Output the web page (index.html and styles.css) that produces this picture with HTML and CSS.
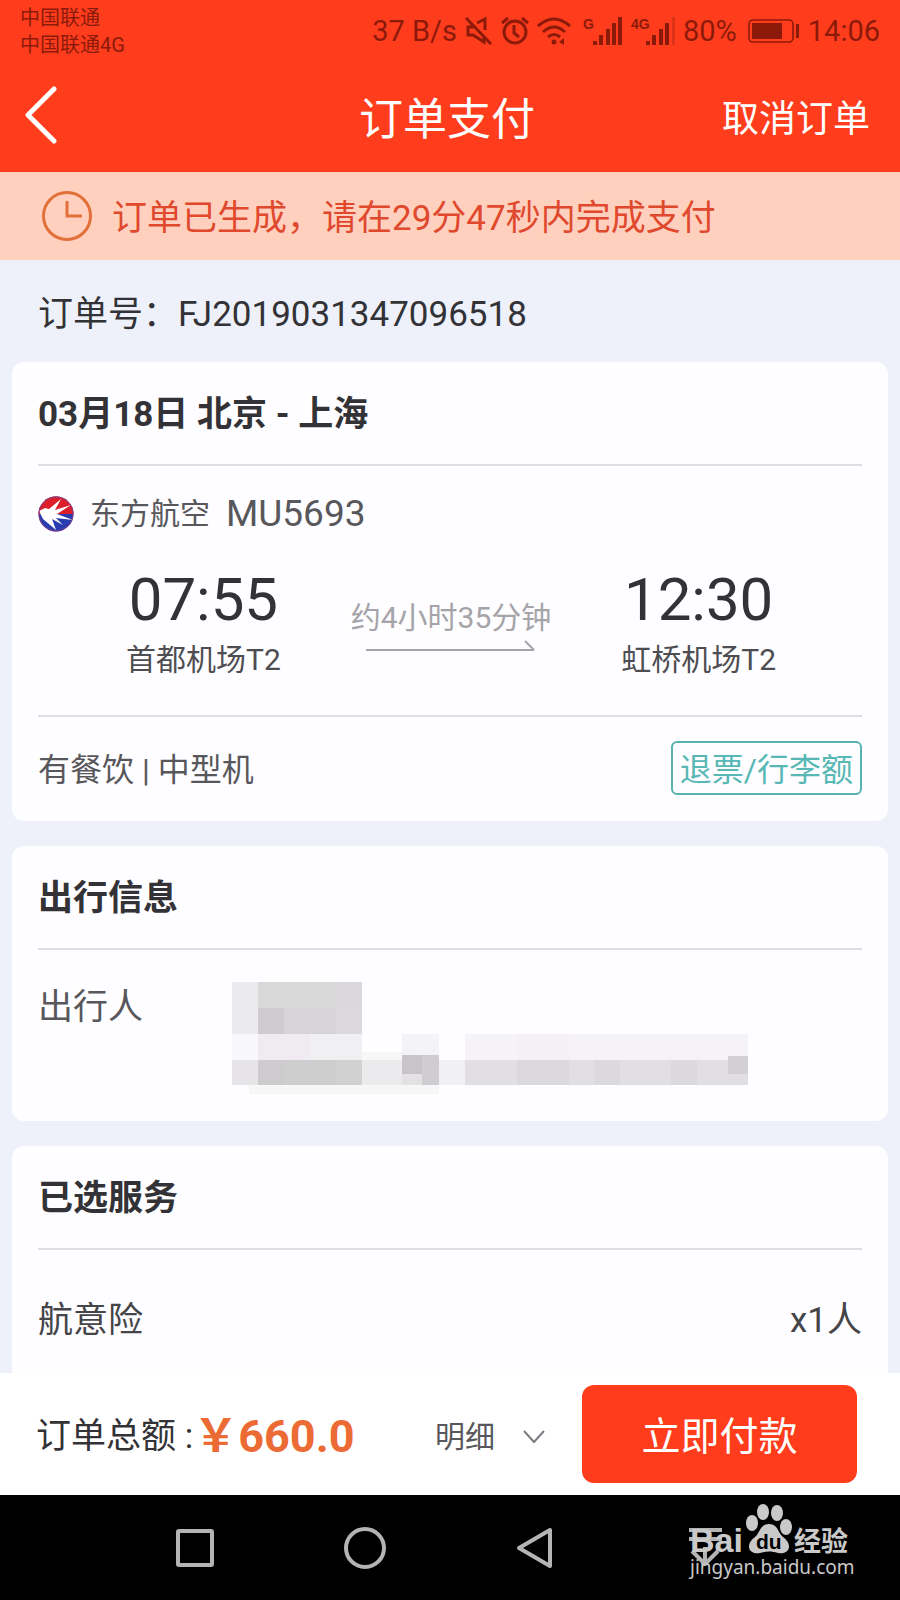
FILE: index.html
```html
<!DOCTYPE html>
<html lang="zh-CN">
<head>
<meta charset="utf-8">
<meta name="viewport" content="width=device-width, initial-scale=1">
<title>订单支付</title>
<link rel="stylesheet" href="styles.css">
</head>
<body>
<div class="page">
  <header class="top">
    <div class="status">
      <div class="carriers"><div>中国联通</div><div>中国联通4G</div></div>
      <div class="indicators">
        <span>37 B/s</span>
        <svg width="28" height="28" viewBox="0 0 28 28" fill="none" stroke="currentColor" stroke-width="3"><path d="M1 1l25 26M9 10H3v8h5l11 7v-5M12 6l8-4v11"/></svg>
        <svg width="28" height="28" viewBox="0 0 28 28" fill="none" stroke="currentColor" stroke-width="3"><circle cx="14" cy="15" r="11"/><path d="M13 8v8l5 4M1 6l6-5M27 6l-6-5"/></svg>
        <svg width="34" height="28" viewBox="0 0 34 28" fill="none" stroke="currentColor" stroke-width="3"><path d="M1 9Q17-5 33 9M6 15q11-10 22 0M11 20q6-5 12 0"/><circle cx="17" cy="25" r="2.5" fill="currentColor" stroke="none"/><path d="M22 25l5-4v7z" fill="currentColor" stroke="none"/></svg>
        <svg class="signal-first" width="40" height="28" viewBox="0 0 40 28" fill="currentColor"><text x="0" y="12" font-size="14" class="net">G</text><path d="M10 24h4v4h-4zM16 18h4v10h-4zM23 12h4v16h-4zM29 6h4v22h-4zM35 0h4v28h-4z"/></svg>
        <svg width="44" height="28" viewBox="0 0 44 28" fill="currentColor"><text x="0" y="12" font-size="14" class="net">4G</text><path d="M15 24h4v4h-4zM21 18h4v10h-4zM28 12h4v16h-4zM34 6h4v22h-4z"/><path d="M41 0h3v28h-3z" opacity=".3"/></svg>
        <span class="battery-level">80%</span>
        <svg width="52" height="26" viewBox="0 0 52 26" fill="none" stroke="currentColor"><rect x="1" y="2" width="44" height="22" rx="4" stroke-width="1.6"/><path d="M4 5h30v16H4zM48 6h3v14h-3z" fill="currentColor" stroke="none"/></svg>
        <span>14:06</span>
      </div>
    </div>
    <div class="bar">
      <button class="back" type="button" aria-label="返回"><svg width="34" height="58" viewBox="0 0 34 58" fill="none" stroke="#fff" stroke-width="5" stroke-linecap="round" stroke-linejoin="round"><path d="M30 3L4 29l26 26"/></svg></button>
      <h1 class="title">订单支付</h1>
      <button class="cancel" type="button">取消订单</button>
    </div>
  </header>

  <div class="notice">
    <svg width="50" height="50" viewBox="0 0 50 50" fill="none" stroke="#e2703a" stroke-width="3"><circle cx="25" cy="25" r="23.5"/><path d="M25 10v15h15"/></svg>
    <span>订单已生成，请在29分47秒内完成支付</span>
  </div>

  <main class="content">
    <p class="order-no">订单号：FJ2019031347096518</p>

    <section class="card">
      <h2 class="card-head">03月18日 北京 - 上海</h2>
      <div class="flight">
        <svg width="36" height="38" viewBox="0 0 36 38"><defs><clipPath id="disc"><circle cx="18" cy="19" r="17.5"/></clipPath></defs><g clip-path="url(#disc)"><path fill="#2a3db0" d="M0 0h36v38H0z"/><path fill="#dc1f2b" d="M0 0h36v19H0z"/><path fill="#fff" d="M1 16l6-3 4 1L23 4l-6 11 16-5-14 9 16 6-17-2 7 7-11-6 4 11L5 24z"/></g><circle cx="18" cy="19" r="17" fill="none" stroke="#8a3a80"/></svg>
        <span class="airline">东方航空</span>
        <span class="flight-no">MU5693</span>
      </div>
      <div class="route">
        <div class="stop"><div class="time">07:55</div><div class="airport">首都机场T2</div></div>
        <div class="duration">
          <span>约4小时35分钟</span>
          <svg width="170" height="12" viewBox="0 0 170 12" fill="none" stroke="#a5a4a9" stroke-width="2"><path d="M0 10h168M159 1l9 9"/></svg>
        </div>
        <div class="stop"><div class="time">12:30</div><div class="airport">虹桥机场T2</div></div>
      </div>
      <div class="extras">
        <span>有餐饮 | 中型机</span>
        <button class="rules" type="button">退票/行李额</button>
      </div>
    </section>

    <section class="card">
      <h2 class="card-head">出行信息</h2>
      <div class="traveller">
        <span>出行人</span>
        <svg width="516" height="112" viewBox="0 0 516 112" shape-rendering="crispEdges" aria-hidden="true">
          <path fill="#ebeaec" d="M0 0h26v52H0z"/><path fill="#d9d8d9" d="M26 0h78v26H26z"/><path fill="#dad6db" d="M104 0h26v26h-26z"/>
          <path fill="#cfcbd0" d="M26 26h26v26H26z"/><path fill="#d7d3d8" d="M52 26h52v26H52z"/><path fill="#dcd9de" d="M104 26h26v26h-26z"/>
          <path fill="#f8f7f9" d="M0 52h26v26H0z"/><path fill="#efebf0" d="M26 52h52v26H26z"/><path fill="#f0eff1" d="M78 52h52v26H78z"/>
          <path fill="#f8f7f8" d="M17 103h190v9H17zM130 70h40v8h-40z"/><path fill="#e7e4e8" d="M0 78h26v25H0z"/><path fill="#cdcbce" d="M26 78h26v25H26z"/><path fill="#cfcecf" d="M52 78h52v25H52z"/><path fill="#d2d1d2" d="M104 78h26v25h-26z"/>
          <path fill="#ebeaec" d="M130 78h40v25h-40z"/><path fill="#f4f3f5" d="M170 52h37v21h-37z"/><path fill="#e3e1e4" d="M170 92h20v11h-20z"/><path fill="#c8c4ca" d="M170 73h20v19h-20z"/><path fill="#d0cdd2" d="M190 73h17v30h-17z"/>
          <path fill="#f1f0f2" d="M207 78h26v25h-26z"/><path fill="#f5f3f6" d="M233 52h283v26H233z"/><path fill="#f4f0f5" d="M285 52h52v26h-52z"/>
          <path fill="#e2dfe4" d="M233 78h283v25H233z"/><path fill="#dcd9de" d="M285 78h52v25h-52zM362 78h26v25h-26zM439 78h26v25h-26z"/><path fill="#d3d0d5" d="M496 74h20v18h-20z"/>
        </svg>
      </div>
    </section>

    <section class="card card-last">
      <h2 class="card-head">已选服务</h2>
      <div class="service"><span>航意险</span><span>x1人</span></div>
    </section>
  </main>

  <footer class="pay">
    <div class="total">订单总额 :<strong class="amount">￥660.0</strong></div>
    <button class="detail" type="button">明细<svg width="24" height="14" viewBox="0 0 24 14" fill="none" stroke="#7b7a80" stroke-width="2"><path d="M2 1l10 11L22 1"/></svg></button>
    <button class="submit" type="button">立即付款</button>
  </footer>

  <nav class="system-nav">
    <button type="button" aria-label="最近任务"><svg width="42" height="42" viewBox="0 0 42 42"><rect x="4" y="4" width="34" height="34" rx="1"/></svg></button>
    <button type="button" aria-label="主页"><svg width="42" height="42" viewBox="0 0 42 42"><circle cx="21" cy="21" r="19"/></svg></button>
    <button type="button" aria-label="后退"><svg width="42" height="42" viewBox="0 0 42 42"><path d="M5 21L36 3v36z"/></svg></button>
    <button type="button" aria-label="通知栏"><svg width="42" height="42" viewBox="0 0 42 42"><path d="M5 3h33M5 12h33M21 20v17M8 24l13 13 13-13"/></svg></button>
    <svg class="watermark" width="176" height="84" viewBox="0 0 176 84" fill="#c9c9c9" aria-label="Baidu经验">
      <text x="6" y="50" font-size="34" class="wm-latin">Bai</text>
      <ellipse cx="68" cy="21" rx="6" ry="8"/><ellipse cx="79" cy="10" rx="6" ry="8"/><ellipse cx="93" cy="11" rx="6" ry="8"/><ellipse cx="102" cy="25" rx="6" ry="8"/>
      <path d="M85 22c-9 0-9 9-14 13-10 7-7 18 5 16 7-2 11-2 18 0 12 2 15-9 5-16-5-4-5-13-14-13z"/>
      <text x="72" y="47" font-size="21" fill="#000" class="wm-latin">du</text>
      <text x="110" y="49" font-size="27" class="wm-cjk">经验</text>
      <text x="6" y="72" font-size="19" class="wm-url">jingyan.baidu.com</text>
    </svg>
  </nav>
</div>
</body>
</html>
```
FILE: styles.css
```css
* { box-sizing: border-box; }
body {
  margin: 0;
  background: #eef1fa;
  color: #333236;
  font-family: Roboto, "Noto Sans CJK SC", sans-serif;
  font-size: 35px;
  line-height: 44px;
}
button {
  padding: 0;
  border: 0;
  background: none;
  color: inherit;
  font: inherit;
  cursor: pointer;
}
h1, h2, p { margin: 0; }
svg { display: block; flex: none; }

.page { display: flex; flex-direction: column; min-height: 100vh; }

.top { background: #ff3d1d; color: #fff; }
.status {
  display: flex;
  justify-content: space-between;
  height: 62px;
  padding: 5px 20px 0;
  color: #8c1a0a;
}
.carriers { font-size: 20px; line-height: 27px; }
.indicators {
  display: flex;
  align-items: center;
  gap: 8px;
  height: 52px;
  font-size: 29px;
  line-height: 52px;
}
.signal-first { margin-left: 4px; }
.battery-level { margin-right: 3px; }
.net { font-family: "Liberation Sans", sans-serif; font-weight: 700; }
.bar {
  display: grid;
  grid-template-columns: 1fr auto 1fr;
  align-items: center;
  height: 110px;
  padding: 0 30px 4px 24px;
}
.back { justify-self: start; }
.title { padding-top: 10px; font-size: 44px; font-weight: 400; line-height: 60px; }
.cancel { justify-self: end; padding-top: 10px; font-size: 37px; }

.notice {
  display: flex;
  align-items: center;
  gap: 20px;
  height: 88px;
  padding: 0 42px;
  background: #ffd0be;
  color: #e0492d;
}
.notice span { padding-top: 6px; }

.content { display: flex; flex: 1; flex-direction: column; gap: 25px; padding: 0 12px; }
.order-no { margin-bottom: -25px; padding: 33px 26px 25px; }
.card { padding: 0 26px; border-radius: 12px; background: #fefdff; }
.card-last { flex: 1; border-radius: 12px 12px 0 0; }
.card-head {
  padding: 31px 0 27px;
  border-bottom: 2px solid #dfdee1;
  font-size: 35px;
  font-weight: 700;
}

.flight { display: flex; align-items: center; padding-top: 26px; color: #58575b; }
.airline { margin-left: 16px; font-size: 30px; }
.flight-no { margin-left: 16px; font-size: 37px; }
.route {
  display: flex;
  align-items: center;
  justify-content: space-between;
  padding: 28px 86px 31px 88px;
  border-bottom: 2px solid #dfdee1;
}
.stop { text-align: center; }
.time { font-size: 60px; line-height: 72px; }
.airport { color: #4e4d51; font-size: 30px; line-height: 48px; }
.duration {
  display: flex;
  flex-direction: column;
  align-items: center;
  color: #a5a4a9;
  font-size: 30px;
}
.extras {
  display: flex;
  align-items: center;
  justify-content: space-between;
  padding: 24px 0 26px;
  color: #58575b;
  font-size: 32px;
}
.extras span { padding-top: 4px; }
.rules {
  padding: 5px 7px 1px;
  border: 2px solid #58b3b0;
  border-radius: 6px;
  color: #58b8b5;
}

.traveller { display: flex; align-items: flex-start; gap: 89px; padding: 32px 0 27px; color: #58575b; }
.traveller span { flex: none; padding-top: 4px; }
.service { display: flex; justify-content: space-between; padding: 49px 0 28px; color: #454448; }

.pay { display: flex; align-items: center; height: 122px; padding: 0 43px 0 36px; background: #fff; }
.total { display: flex; align-items: center; padding-top: 6px; white-space: pre; }
.amount { color: #ec6a34; font-size: 45px; font-weight: 700; }
.detail {
  display: flex;
  align-items: center;
  gap: 27px;
  margin-left: auto;
  padding-top: 6px;
  color: #58575b;
  font-size: 30px;
}
.submit {
  width: 275px;
  height: 98px;
  margin-left: 36px;
  padding-top: 5px;
  border-radius: 12px;
  background: #ff3d1d;
  color: #fff;
  font-size: 39px;
}

.system-nav {
  position: relative;
  display: flex;
  align-items: center;
  height: 105px;
  padding: 0 110px;
  background: #000;
  fill: none;
  stroke: #b4b4b4;
  stroke-width: 4;
  stroke-linejoin: round;
}
.system-nav button { display: flex; flex: 1; justify-content: center; }
.watermark { position: absolute; right: 40px; bottom: 14px; stroke: none; }
.wm-latin { font-family: "Liberation Sans", sans-serif; font-weight: 700; }
.wm-cjk { font-family: "Noto Sans CJK SC", sans-serif; font-weight: 700; }
.wm-url { font-family: "Noto Sans", sans-serif; }
```
